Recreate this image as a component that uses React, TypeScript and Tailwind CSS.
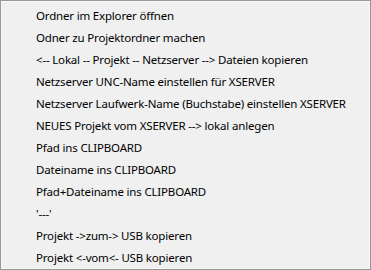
import React from 'react';

const items = [
  'Ordner im Explorer öffnen',
  'Odner zu Projektordner machen',
  '<-- Lokal -- Projekt -- Netzserver --> Dateien kopieren',
  'Netzserver UNC-Name einstellen für XSERVER',
  'Netzserver Laufwerk-Name (Buchstabe) einstellen XSERVER',
  'NEUES Projekt vom XSERVER --> lokal anlegen',
  'Pfad ins CLIPBOARD',
  'Dateiname ins CLIPBOARD',
  'Pfad+Dateiname ins CLIPBOARD',
  "'---'",
  'Projekt ->zum-> USB kopieren',
  'Projekt <-vom<- USB kopieren',
];

const App: React.FC = () => {
  return (
    <div className="w-[371px] h-[270px] bg-white">
      <div className="w-full h-full border border-[#979797] bg-[#f0f0f0]">
        <div className="h-full border border-[#f8f8f8] pt-[3px] font-['Noto_Sans',sans-serif] text-[11.5px] tracking-[-0.18px] text-black">
          {items.map((item) => (
            <div key={item} className="h-[22px] flex items-center pl-[34px] whitespace-pre">
              {item}
            </div>
          ))}
        </div>
      </div>
    </div>
  );
};

export default App;
